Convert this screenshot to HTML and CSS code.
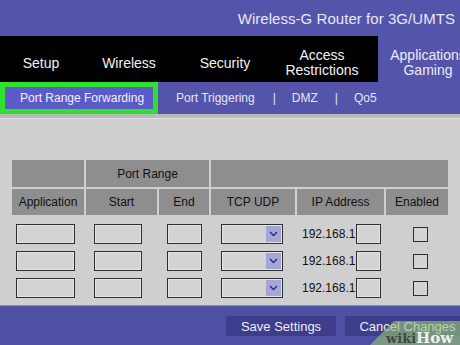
FILE: index.html
```html
<!DOCTYPE html>
<html>
<head>
<meta charset="utf-8">
<link rel="stylesheet" href="styles.css">
</head>
<body>
<div class="page">
  <header class="topbar">
    <div class="title">Wireless-G Router for 3G/UMTS</div>
  </header>
  <nav class="mainnav">
    <div class="tab t-setup">Setup</div>
    <div class="tab t-wireless">Wireless</div>
    <div class="tab t-security">Security</div>
    <div class="tab t-access">Access<br>Restrictions</div>
    <div class="tab t-apps active">Applications<br>Gaming</div>
  </nav>
  <div class="subnav">
    <div class="sub-active"><span>Port Range Forwarding</span></div>
    <div class="sub s-trig">Port Triggering</div>
    <div class="sep s-sep1">|</div>
    <div class="sub s-dmz">DMZ</div>
    <div class="sep s-sep2">|</div>
    <div class="sub s-qos">Qo5</div>
  </div>
  <main class="content">
    <div class="grid head">
      <div class="hcell c-app-top"></div>
      <div class="hcell c-range">Port Range</div>
      <div class="hcell c-rest"></div>
      <div class="hcell">Application</div>
      <div class="hcell">Start</div>
      <div class="hcell">End</div>
      <div class="hcell">TCP UDP</div>
      <div class="hcell">IP Address</div>
      <div class="hcell">Enabled</div>
    </div>
    <div class="grid rows">
      <div class="cell"><span class="box w-app"></span></div>
      <div class="cell"><span class="box w-start"></span></div>
      <div class="cell"><span class="box w-end"></span></div>
      <div class="cell"><span class="select"><span class="arrow"><svg width="9" height="6" viewBox="0 0 9 6"><path d="M1 1 L4.5 4.5 L8 1" fill="none" stroke="#2a2a7a" stroke-width="1.4"/></svg></span></span></div>
      <div class="cell ip"><span class="iptext">192.168.1.</span><span class="box w-ip"></span></div>
      <div class="cell"><span class="check"></span></div>

      <div class="cell"><span class="box w-app"></span></div>
      <div class="cell"><span class="box w-start"></span></div>
      <div class="cell"><span class="box w-end"></span></div>
      <div class="cell"><span class="select"><span class="arrow"><svg width="9" height="6" viewBox="0 0 9 6"><path d="M1 1 L4.5 4.5 L8 1" fill="none" stroke="#2a2a7a" stroke-width="1.4"/></svg></span></span></div>
      <div class="cell ip"><span class="iptext">192.168.1</span><span class="box w-ip"></span></div>
      <div class="cell"><span class="check"></span></div>

      <div class="cell"><span class="box w-app"></span></div>
      <div class="cell"><span class="box w-start"></span></div>
      <div class="cell"><span class="box w-end"></span></div>
      <div class="cell"><span class="select"><span class="arrow"><svg width="9" height="6" viewBox="0 0 9 6"><path d="M1 1 L4.5 4.5 L8 1" fill="none" stroke="#2a2a7a" stroke-width="1.4"/></svg></span></span></div>
      <div class="cell ip"><span class="iptext">192.168.1</span><span class="box w-ip"></span></div>
      <div class="cell"><span class="check"></span></div>
    </div>
  </main>
  <footer class="bottombar">
    <div class="btn b-save">Save Settings</div>
    <div class="btn b-cancel">Cancel Changes</div>
  </footer>
  <div class="watermark">
    <svg class="wm-shape" width="90" height="26" viewBox="0 0 90 26"><polygon points="0,26 24,2 90,2 90,26" fill="rgba(150,195,120,0.62)"/></svg>
    <span class="wm-text"><span class="wm-wiki">wiki</span><span class="wm-how">How</span></span>
  </div>
</div>
</body>
</html>
```
FILE: styles.css
```css
html, body {
  margin: 0;
  padding: 0;
}
body {
  width: 460px;
  height: 345px;
  overflow: hidden;
  font-family: "Liberation Sans", Arial, sans-serif;
  background: #cfcfcf;
}
.page {
  position: relative;
  width: 460px;
  height: 345px;
  overflow: hidden;
  display: flex;
  flex-direction: column;
}
.topbar {
  height: 36px;
  background: #5454aa;
  display: flex;
  align-items: center;
  justify-content: flex-end;
  padding-right: 5px;
}
.title {
  color: #e8e8f6;
  font-size: 15px;
  letter-spacing: 0.05px;
}
.mainnav {
  height: 46px;
  background: #000;
  display: flex;
  color: #f2f2f2;
  font-size: 14px;
  line-height: 15px;
  text-align: center;
}
.tab {
  flex: none;
  box-sizing: border-box;
  padding-top: 8px;
  display: flex;
  align-items: center;
  justify-content: center;
  white-space: nowrap;
}
.t-setup { width: 82px; }
.t-wireless { width: 94px; }
.t-security { width: 98px; }
.t-access { width: 104px; padding-right: 8px; }
.t-apps {
  width: 100px;
  background: #5454aa;
  color: #ececf8;
}
.subnav {
  height: 32px;
  background: #5454aa;
  display: flex;
  align-items: center;
  color: #e4e4f4;
  font-size: 12px;
}
.sub-active {
  box-sizing: border-box;
  width: 158px;
  height: 32px;
  border: 5px solid #2fe02f;
  background: #5b5bc8;
  display: flex;
  align-items: center;
  padding-left: 15px;
  color: #f0f0fa;
  white-space: nowrap;
}
.sub, .sep { white-space: nowrap; }
.s-trig { margin-left: 18px; }
.s-sep1 { margin-left: 18px; }
.s-dmz { margin-left: 16px; }
.s-sep2 { margin-left: 17px; }
.s-qos { margin-left: 16px; }
.content {
  flex: 1;
  border-top: 4px solid #b9b9b9;
  box-shadow: inset 0 1px 0 #e2e2e2;
  padding: 42px 0 0 12px;
  color: #111;
  font-size: 12px;
}
.grid {
  display: grid;
  grid-template-columns: 72px 71px 50px 84px 87px 62px;
  column-gap: 2px;
}
.head {
  grid-template-rows: 27px 26px;
  row-gap: 2px;
}
.hcell {
  background: #8e8e8e;
  display: flex;
  align-items: center;
  justify-content: center;
  color: #111;
}
.c-range { grid-column: span 2; }
.c-rest { grid-column: span 3; }
.rows {
  margin-top: 9px;
  grid-auto-rows: 27px;
}
.cell {
  display: flex;
  align-items: flex-start;
}
.box {
  box-sizing: border-box;
  display: block;
  height: 20px;
  border: 1px solid #2e2e2e;
  box-shadow: inset 0 0 0 1px #e4e4e4;
  background: #d3d3d3;
}
.w-app { width: 59px; margin-left: 4px; }
.w-start { width: 48px; margin-left: 8px; }
.w-end { width: 35px; margin-left: 8px; }
.w-ip { width: 25px; }
.select {
  box-sizing: border-box;
  display: flex;
  justify-content: flex-end;
  align-items: center;
  width: 62px;
  height: 20px;
  margin-left: 10px;
  border: 1px solid #2e2e2e;
  box-shadow: inset 0 0 0 1px #e4e4e4;
  background: #d3d3d3;
  padding-right: 1px;
}
.arrow {
  width: 15px;
  height: 16px;
  background: #a6a6d6;
  display: flex;
  align-items: center;
  justify-content: center;
}
.ip {
  align-items: flex-start;
}
.iptext {
  margin-left: 5px;
  width: 54px;
  line-height: 20px;
  font-size: 12px;
  color: #111;
  white-space: nowrap;
}
.check {
  box-sizing: border-box;
  display: block;
  width: 15px;
  height: 15px;
  margin-left: 27px;
  margin-top: 3px;
  border: 1px solid #2e2e2e;
  background: #d3d3d3;
}
.bottombar {
  height: 40px;
  box-sizing: border-box;
  background: #4f4fa3;
  border-top: 1px solid #8a8ad2;
  display: flex;
  align-items: flex-start;
  padding: 10px 0 0 226px;
  gap: 9px;
}
.btn {
  flex: none;
  height: 20px;
  background: #3d3d8c;
  color: #ececf8;
  font-size: 13px;
  display: flex;
  align-items: center;
  justify-content: center;
  white-space: nowrap;
}
.b-save { width: 110px; }
.b-cancel { width: 125px; }
.watermark {
  position: absolute;
  right: 0;
  bottom: 0;
  width: 90px;
  height: 26px;
}
.wm-shape {
  position: absolute;
  left: 0;
  top: 0;
}
.wm-text {
  position: absolute;
  left: 16px;
  top: 10px;
  font-family: "DejaVu Serif", "Liberation Serif", serif;
  font-weight: bold;
  font-size: 15px;
  line-height: 18px;
  white-space: nowrap;
}
.wm-wiki { color: #3d4a3a; font-size: 13px; }
.wm-how { color: #eef3ea; }
```
